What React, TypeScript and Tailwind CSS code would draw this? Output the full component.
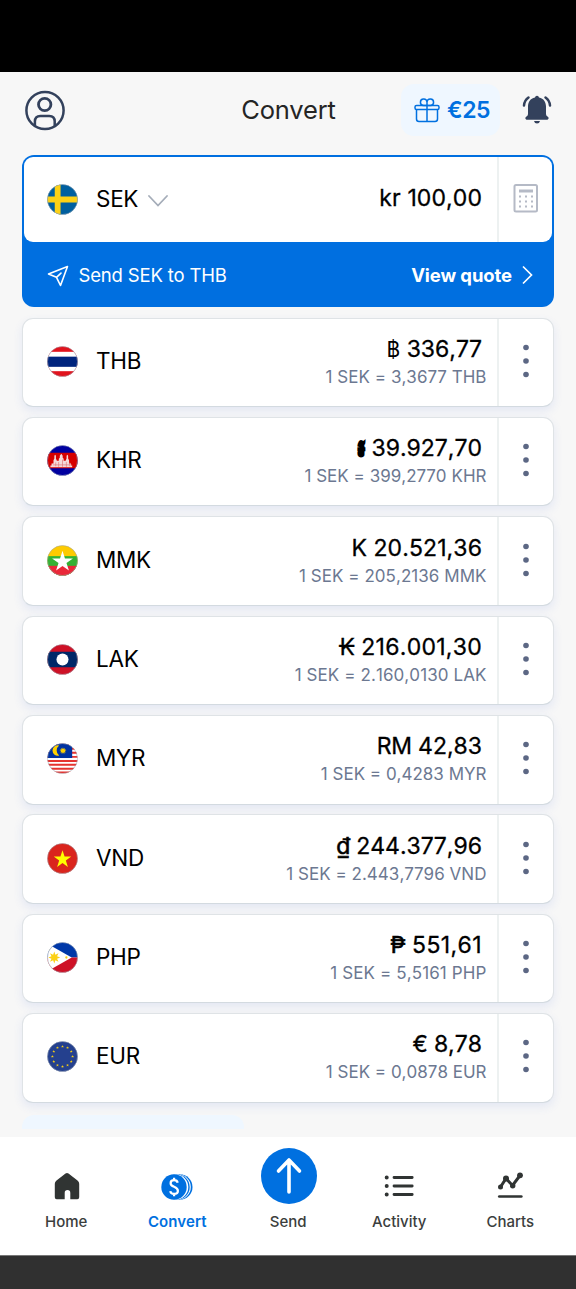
import { type ReactNode } from "react";

const star = (cx: number, cy: number, r: number, n = 5, inner = 0.382) =>
  Array.from({ length: n * 2 }, (_, i) => {
    const a = (Math.PI * i) / n - Math.PI / 2;
    const q = i % 2 ? r * inner : r;
    return `${(cx + q * Math.cos(a)).toFixed(2)},${(cy + q * Math.sin(a)).toFixed(2)}`;
  }).join(" ");

const flags: Record<string, ReactNode> = {
  SEK: (
    <>
      <rect width="32" height="32" fill="#005f9f" />
      <path d="M8 0h6v32H8zM0 13h32v6H0z" fill="#fdd116" />
    </>
  ),
  THB: (
    <>
      <rect width="32" height="32" fill="#e1131d" />
      <rect y="6" width="32" height="20" fill="#fff" />
      <rect y="11" width="32" height="10.5" fill="#00247d" />
    </>
  ),
  KHR: (
    <>
      <rect width="32" height="32" fill="#0000a0" />
      <rect y="8" width="32" height="16" fill="#d60000" />
      <path
        d="M3.5 23v-1.8h1.2v-2h2v-3.4l.9-1.8V11l.8-1 .8 1v3l1 2.2h2v-2l1-1v-2l1.6-2.2 1.4 2.2v2l1 1v2h2l1-2.2v-3l.8-1 .8 1v3l1 1.8v3.4h2v2h1.2V23z"
        fill="#f6dada"
      />
      <path d="M6 20.5h20M12 17.5v5M20 17.5v5M16 15v7.5M9 18v4M23.500 18v4" stroke="#dc6a6a" strokeWidth=".6" />
    </>
  ),
  MMK: (
    <>
      <rect width="32" height="32" fill="#fecb00" />
      <rect y="11.500" width="32" height="21" fill="#34b233" />
      <rect y="21.500" width="32" height="11" fill="#ea2839" />
      <polygon points={star(16, 17.3, 11.3)} fill="#fff" />
    </>
  ),
  LAK: (
    <>
      <rect width="32" height="32" fill="#ce1126" />
      <rect y="8" width="32" height="16" fill="#002868" />
      <circle cx="16" cy="16" r="6.200" fill="#fff" />
    </>
  ),
  MYR: (
    <>
      <rect width="32" height="32" fill="#fff" />
      <path d="M0 1.500h32M0 6h32M0 10h32M0 14.300h32M0 18.500h32M0 22.500h32M0 26.500h32M0 30.500h32" stroke="#e5332f" strokeWidth="2" />
      <rect width="26" height="15.500" fill="#0032a0" />
      <path d="M12.500 2.600a5.400 5.400 0 1 0 0 10.400a6.600 6.600 0 0 1 0-10.400z" fill="#ffd100" />
      <polygon points={star(16.500, 8, 3.600, 12, 0.55)} fill="#ffd100" />
    </>
  ),
  VND: (
    <>
      <rect width="32" height="32" fill="#da251d" />
      <polygon points={star(16, 17, 9.500)} fill="#ff0" />
    </>
  ),
  PHP: (
    <>
      <rect width="32" height="16" fill="#0038a8" />
      <rect y="16" width="32" height="16" fill="#ce1126" />
      <path d="M0 1.500v29L25.500 16z" fill="#fff" />
      <polygon points={star(7.500, 16, 6.200, 8, 0.5)} fill="#fcd116" />
      <circle cx="20" cy="16" r="1.200" fill="#fcd116" />
      <circle cx="1.500" cy="8" r="1" fill="#fcd116" />
    </>
  ),
  EUR: (
    <>
      <rect width="32" height="32" fill="#24408e" />
      {Array.from({ length: 12 }, (_, i) => (
        <polygon
          key={i}
          points={star(16 + 10.4 * Math.sin((i * Math.PI) / 6), 16 - 10.4 * Math.cos((i * Math.PI) / 6), 1.6)}
          fill="#f8d012"
        />
      ))}
    </>
  ),
};

function Flag({ code }: { code: string }) {
  return (
    <svg viewBox="0 0 32 32" className="size-[31px] shrink-0">
      <clipPath id={`clip-${code}`}>
        <circle cx="16" cy="16" r="15.600" />
      </clipPath>
      <g clipPath={`url(#clip-${code})`}>{flags[code]}</g>
      <circle cx="16" cy="16" r="15.500" fill="none" stroke="#9aa3b0" strokeOpacity=".65" strokeWidth=".8" />
    </svg>
  );
}

const rows = [
  { code: "THB", symbol: "฿", amount: "336,77", rate: "3,3677", symbolClass: "text-[21px] [-webkit-text-stroke:0px]", spacing: "", rateSpacing: "tracking-[0.04px]" },
  { code: "KHR", symbol: "៛", amount: "39.927,70", rate: "399,2770", symbolClass: "[-webkit-text-stroke:2.8px_black]", spacing: "", rateSpacing: "tracking-[0.02px]" },
  { code: "MMK", symbol: "K", amount: "20.521,36", rate: "205,2136", symbolClass: "", spacing: "tracking-[0.1px]", rateSpacing: "tracking-[0.04px]" },
  { code: "LAK", symbol: "₭", amount: "216.001,30", rate: "2.160,0130", symbolClass: "", spacing: "tracking-[0.27px]", rateSpacing: "tracking-[0.09px]" },
  { code: "MYR", symbol: "RM", amount: "42,83", rate: "0,4283", symbolClass: "tracking-[-0.4px]", spacing: "", rateSpacing: "" },
  { code: "VND", symbol: "₫", amount: "244.377,96", rate: "2.443,7796", symbolClass: "tracking-[-0.5px] [-webkit-text-stroke:0.6px_black]", spacing: "", rateSpacing: "tracking-[0.03px]" },
  { code: "PHP", symbol: "₱", amount: "551,61", rate: "5,5161", symbolClass: "[-webkit-text-stroke:0.6px_black]", spacing: "tracking-[0.4px]", rateSpacing: "tracking-[0.11px]" },
  { code: "EUR", symbol: "€", amount: "8,78", rate: "0,0878", symbolClass: "tracking-[-0.4px]", spacing: "", rateSpacing: "" },
];

function Row({ code, symbol, amount, rate, symbolClass, spacing, rateSpacing }: (typeof rows)[number]) {
  return (
    <div className="flex h-[89.500px] shrink-0 rounded-[11px] border border-[#dfe3e6] border-b-[#d3dae0] bg-white shadow-[0_4px_10px_rgba(60,100,220,0.1)]">
      <div className="flex flex-1 items-center pl-[23.500px]">
        <div className="-mt-[2px] flex">
          <Flag code={code} />
        </div>
        <span className="ml-[18.500px] -mt-[3px] text-[22.500px] leading-7 tracking-[-0.3px] text-black">{code}</span>
        <div className="mt-px ml-auto flex flex-col items-end">
          <span className="mr-[15px] text-[23px] leading-[29px] text-black [-webkit-text-stroke:0.3px_black] [font-kerning:none]">
            <span className={symbolClass}>{symbol}</span> <span className={spacing}>{amount}</span>
          </span>
          <span className="mr-[10.500px] text-[17px] leading-[27px] text-[#6c7891] [font-kerning:none]">
            <span className={rateSpacing}>
              1 SEK = {rate} {code}
            </span>
          </span>
        </div>
      </div>
      <div className="flex w-[56px] items-center justify-center border-l-2 border-[#edf1f1]">
        <svg viewBox="0 0 8 34" className="-mt-[3px] mr-px h-[34px] w-2" fill="#5c6784">
          <circle cx="4" cy="3.500" r="2.800" />
          <circle cx="4" cy="17" r="2.800" />
          <circle cx="4" cy="30.500" r="2.800" />
        </svg>
      </div>
    </div>
  );
}

function Tab({ label, active, children }: { label: string; active?: boolean; children: ReactNode }) {
  return (
    <div className="flex w-[111px] flex-col items-center">
      <div className="flex h-[60.500px] items-end justify-center">
        <div className="flex h-[48px] items-center justify-center">{children}</div>
      </div>
      <span className={active ? "text-[15px] leading-6 font-semibold tracking-[0.1px] text-[#0070e0]" : "text-[15px] leading-6 font-medium text-[#3b3e3d]"}>
        {label}
      </span>
    </div>
  );
}

export default function App() {
  return (
    <div className="flex h-[1289px] w-[576px] flex-col overflow-hidden bg-[#f7f7f7] font-['Inter','Noto_Sans',sans-serif]">
      <div className="h-[72px] shrink-0 bg-black" />
      <header className="flex h-[83px] shrink-0 items-start justify-between pr-[23px] pl-[24px]">
        <div className="flex w-[160px] pt-[18px]">
          <svg viewBox="0 0 42 42" className="size-[42px]" fill="none" stroke="#33415c" strokeWidth="2.500">
            <circle cx="21" cy="20.500" r="18.600" />
            <circle cx="20.700" cy="14.500" r="6.200" strokeWidth="2.800" />
            <path d="M10.900 36v-4.500q0-5.500 5.500-5.500h8.800q5.500 0 5.500 5.500V36" />
          </svg>
        </div>
        <h1 className="pt-[22px] text-[25.500px] leading-8 tracking-[-0.15px] text-[#252525]">Convert</h1>
        <div className="flex w-[160px] justify-end">
          <div className="mt-[12px] flex h-[52px] w-[99px] shrink-0 items-center gap-[7px] rounded-[13px] bg-[#eff7ff] pl-[13px]">
            <svg viewBox="0 0 26 26" className="size-[26px]" fill="none" stroke="#0070e0" strokeWidth="1.500" strokeLinejoin="round">
              <rect x="1" y="8.500" width="24" height="4" rx="1.500" />
              <path d="M2.500 12.500v9.500q0 2.500 2.500 2.500h16q2.500 0 2.500-2.500v-9.500M13 8.500v16M13 8.500H9.500a3.300 3.300 0 1 1 3.500-3.700zM13 8.500h3.500a3.300 3.300 0 1 0-3.500-3.700z" />
            </svg>
            <span className="text-[23px] leading-8 font-semibold tracking-[-0.4px] text-[#0070e0]">€25</span>
          </div>
          <svg viewBox="0 0 30 30" className="mt-[23px] mr-[0.500px] ml-[22.500px] size-[30px] shrink-0" fill="#33415c">
            <path d="M15 .8a2 2 0 0 1 2 1.600c4.700.9 7 4.600 7 9.100v7.500q0 1.500 1.500 2.500c2 1.300 1 3.300-.8 3.300H5.300c-1.800 0-2.800-2-.8-3.300q1.500-1 1.500-2.500v-7.500c0-4.500 2.300-8.200 7-9.100a2 2 0 0 1 2-1.600zM12 26h6q-.6 2.600-3 2.600T12 26z" />
            <path d="M6.500 2.500Q2.300 5.500 2 10.500M23.500 2.500Q27.700 5.500 28 10.500" fill="none" stroke="#33415c" strokeWidth="2.500" strokeLinecap="round" />
          </svg>
        </div>
      </header>

      <main className="flex h-[982px] shrink-0 flex-col overflow-hidden px-[22px]">
        <section className="mb-[10.500px] h-[152px] shrink-0 rounded-[12px] bg-[#006fe0] p-[2px]">
          <div className="flex h-[85px] rounded-[9px] bg-white">
            <div className="flex flex-1 items-center pl-[22.500px]">
              <Flag code="SEK" />
              <span className="ml-[18.500px] -mt-[2px] text-[22.500px] leading-7 tracking-[-0.3px] text-black">SEK</span>
              <svg viewBox="0 0 20 12" className="mt-[2px] ml-[9.500px] h-3 w-5" fill="none" stroke="#a5adb9" strokeWidth="1.800" strokeLinecap="round">
                <path d="M1 1l9 9.500L19 1" />
              </svg>
              <span className="mr-[15px] -mt-[3px] ml-auto text-[23px] leading-7 tracking-[0.1px] text-black [-webkit-text-stroke:0.3px_black] [font-kerning:none]">
                kr 100,00
              </span>
            </div>
            <div className="flex w-[55px] items-center justify-center border-l-2 border-[#edf1f1]">
              <svg viewBox="0 0 26 30" className="-mt-[4px] h-[30px] w-[26px]" fill="none" stroke="#b5bac6">
                <rect x="1.500" y="2" width="22.500" height="26.500" rx="1.500" strokeWidth="2" />
                <path d="M6 8h14" strokeWidth="3" />
                <path d="M6 13.500h14M6 18.500h14M6 23.500h14" strokeWidth="2" strokeDasharray="2 4" />
              </svg>
            </div>
          </div>
          <div className="flex h-[63px] items-center pr-[19px] pl-[23px] text-white">
            <svg viewBox="0 0 22 22" className="mt-[4px] size-[22px]" fill="none" stroke="white" strokeWidth="1.600" strokeLinejoin="round" strokeLinecap="round">
              <path d="M20.500 1.500L1.500 9l8 3.300L13.500 20.500zM9.500 12.300l4.500-4.200" />
            </svg>
            <span className="mt-[2px] ml-[9.500px] text-[18.500px] leading-6 tracking-[-0.16px]">Send SEK to THB</span>
            <span className="mt-[2px] ml-auto text-[18.500px] leading-6 font-bold tracking-[-0.1px]">View quote</span>
            <svg viewBox="0 0 12 20" className="mt-[2px] ml-[9px] h-5 w-3" fill="none" stroke="white" strokeWidth="1.700">
              <path d="M2 1.500l8.500 8.500L2 18.500" />
            </svg>
          </div>
        </section>
        <div className="flex flex-col gap-[9.900px]">
          {rows.map((r) => (
            <Row key={r.code} {...r} />
          ))}
        </div>
        <div className="mt-[12.500px] h-[14px] w-[222px] shrink-0 rounded-t-[12px] bg-[#eff7ff]" />
      </main>

      <nav className="flex h-[118px] shrink-0 justify-center bg-white pt-[12px] pl-[0.500px]">
        <Tab label="Home">
          <svg viewBox="0 0 26 28" className="ml-px h-7 w-[26px]" fill="#303433">
            <path d="M11.500 1.600q1.500-1 3 0l9 6.800q1.700 1.400 1.700 3.300v13.600q0 1.900-1.900 1.900H16.300v-6.300a2.800 2.800 0 0 0-5.600 0v6.300H2.700q-1.900 0-1.900-1.900V11.700q0-1.900 1.700-3.300z" />
          </svg>
        </Tab>
        <Tab label="Convert" active>
          <svg viewBox="0 0 32 28" className="mt-[2px] h-7 w-8" fill="#0070e0">
            <circle cx="18.800" cy="14" r="12.700" />
            <circle cx="17.100" cy="14" r="12.700" fill="white" />
            <circle cx="16" cy="14" r="12.700" />
            <circle cx="14.600" cy="14" r="12.700" fill="white" />
            <circle cx="13" cy="14" r="12.700" />
            <path d="M16.700 9.700q-.5-2.500-3.600-2.500-3.500 0-3.500 3 0 2.200 3.500 3.600 3.800 1.500 3.800 4.100 0 3-3.800 3-3.400 0-3.800-2.800M13.100 4.800v2.400M13.100 20.900v2.400" fill="none" stroke="white" strokeWidth="2.200" />
          </svg>
        </Tab>
        <Tab label="Send">
          <div className="-mt-[19px] ml-px flex size-[56px] items-center justify-center rounded-full bg-[#0070e0]">
            <svg viewBox="0 0 28 38" className="h-[38px] w-7" fill="none" stroke="white" strokeWidth="3.600" strokeLinecap="round" strokeLinejoin="round">
              <path d="M14 35V3M3.500 14L14 3l10.500 11" />
            </svg>
          </div>
        </Tab>
        <Tab label="Activity">
          <svg viewBox="0 0 30 24" className="h-6 w-[30px]" stroke="#303433" fill="#303433" strokeLinecap="round">
            <path d="M10 3.500h18.200M10 12h18.200M10 20.500h18.200" strokeWidth="2.800" />
            <path d="M2.700 3.500h.01M2.700 12h.01M2.700 20.500h.01" strokeWidth="4" />
          </svg>
        </Tab>
        <Tab label="Charts">
          <svg viewBox="0 0 26 28" className="-mt-px h-7 w-[26px]" fill="#303433" stroke="#303433" strokeLinecap="round">
            <path d="M3.500 16L9 7.500l6.500 7L23 4.500" fill="none" strokeWidth="3" />
            <circle cx="3.500" cy="16" r="2.500" stroke="none" />
            <circle cx="9" cy="7.500" r="3" stroke="none" />
            <circle cx="15.700" cy="14.700" r="2.700" stroke="none" />
            <circle cx="23" cy="4.300" r="2.900" stroke="none" />
            <path d="M2.300 25.500h22" strokeWidth="2.700" />
          </svg>
        </Tab>
      </nav>
      <div className="h-[34px] shrink-0 border-t border-[#777] bg-[#303030]" />
    </div>
  );
}
